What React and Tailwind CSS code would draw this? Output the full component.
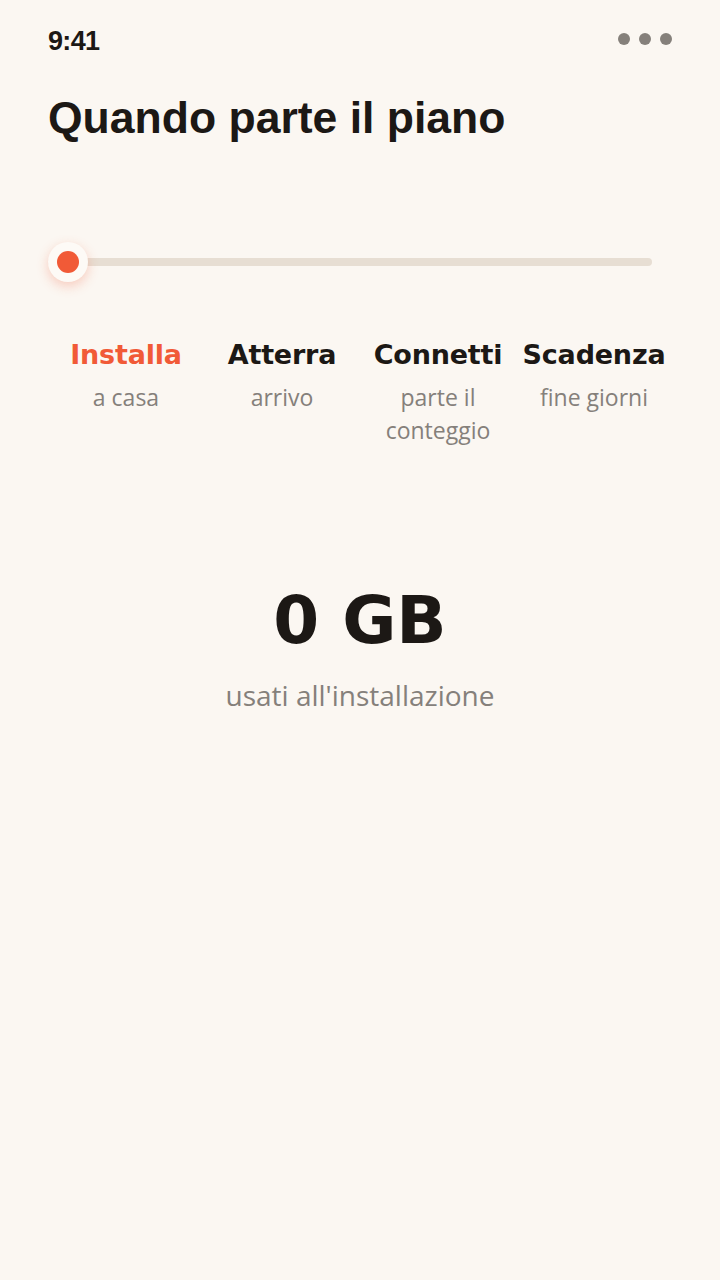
import React from 'react';

const stops = [
  { title: 'Installa', sub: 'a casa', active: true },
  { title: 'Atterra', sub: 'arrivo' },
  { title: 'Connetti', sub: 'parte il conteggio' },
  { title: 'Scadenza', sub: 'fine giorni' },
];

function StatusBar() {
  return (
    <div className="flex items-center justify-between px-12 pt-[26px] h-[56px]">
      <span className="text-[27px] leading-none font-bold text-[#1c1815] tracking-tight [font-family:'Liberation_Sans',sans-serif]">
        9:41
      </span>
      <div className="flex items-center gap-[9px] -mt-[4px]">
        <span className="w-[12px] h-[12px] rounded-full bg-[#85807b]" />
        <span className="w-[12px] h-[12px] rounded-full bg-[#85807b]" />
        <span className="w-[12px] h-[12px] rounded-full bg-[#85807b]" />
      </div>
    </div>
  );
}

function Slider() {
  return (
    <div className="relative mx-12 mr-[68px] h-[40px] flex items-center">
      <div className="w-full h-[8px] rounded-full bg-[#e7ded3]" />
      <div className="absolute left-0 top-0 w-[40px] h-[40px] rounded-full bg-[#fdfaf6] flex items-center justify-center shadow-[0_4px_12px_rgba(241,90,55,0.28)]">
        <span className="w-[22px] h-[22px] rounded-full bg-[#f15a37]" />
      </div>
    </div>
  );
}

export default function App() {
  return (
    <div className="w-[720px] h-[1280px] bg-[#fbf7f2] [font-family:'Open_Sans',sans-serif]">
      <StatusBar />

      <h1 className="px-12 mt-[38px] text-[44.5px] leading-[48px] font-bold text-[#1c1815] [font-family:'Liberation_Sans',sans-serif]">
        Quando parte il piano
      </h1>

      <div className="mt-[100px]">
        <Slider />
      </div>

      <div className="grid grid-cols-4 px-12 mt-[57px]">
        {stops.map((s) => (
          <div key={s.title} className="flex flex-col items-center text-center px-1">
            <span
              className={`text-[27px] leading-[32px] font-bold [font-family:'DejaVu_Sans',sans-serif] tracking-[-0.2px] ${
                s.active ? 'text-[#f15a37]' : 'text-[#1c1815]'
              }`}
            >
              {s.title}
            </span>
            <span className="mt-[10px] text-[23px] leading-[33px] font-medium text-[#85807b] px-3">
              {s.sub}
            </span>
          </div>
        ))}
      </div>

      <div className="flex flex-col items-center mt-[138px]">
        <span className="text-[66px] leading-[72px] font-bold text-[#1c1815] [font-family:'DejaVu_Sans',sans-serif]">
          0 GB
        </span>
        <span className="mt-[21px] text-[28px] leading-[34px] text-[#85807b]">
          usati all'installazione
        </span>
      </div>
    </div>
  );
}
